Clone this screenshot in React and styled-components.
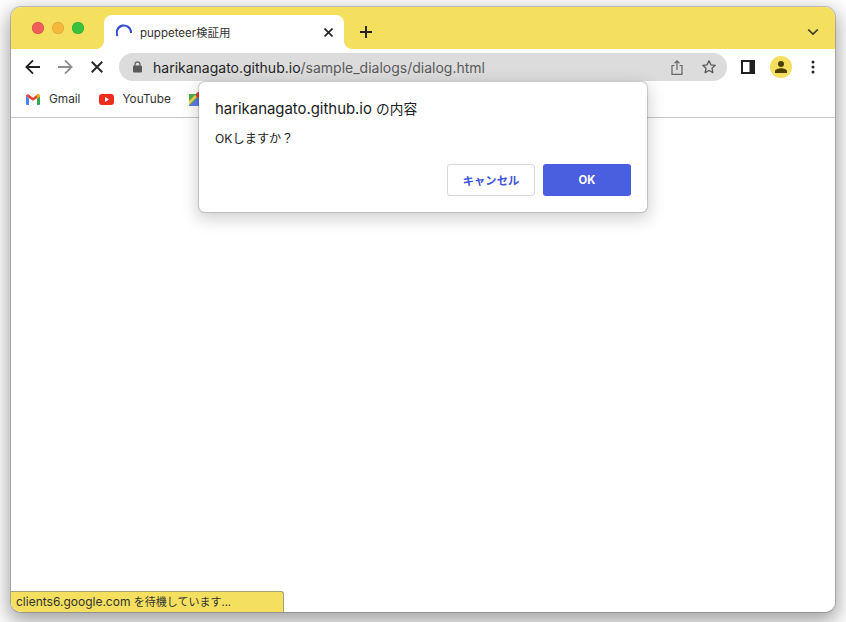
import React from "react";
import styled, { createGlobalStyle } from "styled-components";

const YELLOW = "#f5df5f";
const CJK = `"Noto Sans CJK JP"`;

const Global = createGlobalStyle`
  html, body { margin: 0; padding: 0; background: #fff; }
  body { width: 846px; height: 622px; overflow: hidden; font-family: Inter, ${CJK}, sans-serif; }
`;

const Desktop = styled.div`
  width: 846px;
  height: 622px;
  padding: 7px 11px 10px 11px;
  box-sizing: border-box;
`;

const Win = styled.div`
  position: relative;
  height: 605px;
  border-radius: 10px;
  background: #fff;
  display: flex;
  flex-direction: column;
  box-shadow: 0 0 0 1px rgba(0, 0, 0, 0.18), 0 7px 20px 3px rgba(0, 0, 0, 0.36);
`;

const TitleBar = styled.div`
  height: 42px;
  flex: none;
  background: ${YELLOW};
  border-radius: 10px 10px 0 0;
  display: flex;
  align-items: flex-end;
`;

const Traffic = styled.div`
  width: 93px;
  flex: none;
  height: 42px;
  display: flex;
  gap: 8px;
  padding: 15px 0 0 21px;
  box-sizing: border-box;
`;

const Light = styled.span`
  width: 12px;
  height: 12px;
  border-radius: 50%;
  background: ${(p) => p.$c};
  box-shadow: inset 0 0 0 0.5px ${(p) => p.$b};
`;

const Tab = styled.div`
  position: relative;
  width: 240px;
  height: 34px;
  flex: none;
  background: #fff;
  border-radius: 8px 8px 0 0;
  display: flex;
  align-items: center;
  padding: 0 11px 0 12px;
  box-sizing: border-box;
  &::before, &::after {
    content: "";
    position: absolute;
    bottom: 0;
    width: 8px;
    height: 8px;
  }
  &::before {
    left: -8px;
    background: radial-gradient(circle at 0 0, ${YELLOW} 7.6px, #fff 8.2px);
  }
  &::after {
    right: -8px;
    background: radial-gradient(circle at 100% 0, ${YELLOW} 7.6px, #fff 8.2px);
  }
`;

const TabTitle = styled.span`
  flex: 1;
  margin-left: 8px;
  font-size: 11.5px;
  color: #333;
  white-space: nowrap;
`;

const NewTab = styled.div`
  margin-left: 14px;
  width: 16px;
  height: 34px;
  display: flex;
  align-items: center;
  justify-content: center;
`;

const TabMenu = styled.div`
  margin-left: auto;
  width: 14px;
  height: 34px;
  margin-right: 15px;
  display: flex;
  align-items: center;
  justify-content: center;
`;

const Toolbar = styled.div`
  height: 34px;
  flex: none;
  display: flex;
  align-items: center;
  padding: 2px 0 0 12px;
  box-sizing: border-box;
`;

const Nav = styled.div`
  width: 20px;
  height: 20px;
  margin-right: 12px;
  display: flex;
  align-items: center;
  justify-content: center;
  flex: none;
`;

const Omni = styled.div`
  width: 608px;
  height: 28px;
  border-radius: 14px;
  background: #dcdcdc;
  display: flex;
  align-items: center;
  padding: 0 9px 0 14px;
  box-sizing: border-box;
  flex: none;
`;

const Url = styled.div`
  flex: 1;
  margin-left: 11px;
  font-size: 14px;
  color: #5a5a5a;
  white-space: nowrap;
`;

const Host = styled.span`
  color: #1f1f1f;
`;

const OmniIcon = styled.div`
  width: 18px;
  height: 18px;
  margin-left: 14px;
  display: flex;
  align-items: center;
  justify-content: center;
`;

const ToolIcons = styled.div`
  display: flex;
  align-items: center;
  margin-left: 11px;
`;

const ToolIcon = styled.div`
  width: 20px;
  height: 22px;
  display: flex;
  align-items: center;
  justify-content: center;
  margin-right: 12px;
`;

const Avatar = styled.div`
  width: 22px;
  height: 22px;
  border-radius: 50%;
  background: ${YELLOW};
  display: flex;
  align-items: center;
  justify-content: center;
  margin-right: 19px;
`;

const Bookmarks = styled.div`
  height: 35px;
  flex: none;
  border-bottom: 1px solid #c6c6c6;
  display: flex;
  align-items: center;
  padding: 0 0 2px 15px;
  box-sizing: border-box;
`;

const Bookmark = styled.div`
  display: flex;
  align-items: center;
  gap: ${(p) => p.$inner}px;
  font-size: 11.8px;
  color: #333;
  margin-right: ${(p) => p.$gap}px;
`;

const Page = styled.div`
  flex: 1;
  background: #fff;
  border-radius: 0 0 10px 10px;
`;

const Dialog = styled.div`
  position: absolute;
  left: 188px;
  top: 75px;
  width: 448px;
  height: 130px;
  box-sizing: border-box;
  background: #fff;
  border-radius: 6px;
  padding: 17px 16px 16px;
  box-shadow: 0 0 1px 0.5px rgba(0, 0, 0, 0.16), 0 5px 16px 3px rgba(0, 0, 0, 0.17);
  display: flex;
  flex-direction: column;
`;

const DialogTitle = styled.div`
  font-size: 14.9px;
  line-height: 20px;
  color: #202124;
  white-space: nowrap;
`;

const SmallCjk = styled.span`
  font-size: ${(p) => p.$size}px;
`;

const DialogText = styled.div`
  margin-top: 11px;
  font-size: 12.2px;
  line-height: 18px;
  color: #202124;
`;

const Buttons = styled.div`
  display: flex;
  justify-content: flex-end;
  gap: 8px;
  margin-top: 16px;
`;

const Btn = styled.div`
  width: 88px;
  height: 32px;
  box-sizing: border-box;
  border-radius: 3px;
  display: flex;
  align-items: center;
  justify-content: center;
  font-size: 11.3px;
  font-weight: 700;
  background: ${(p) => (p.$primary ? "#4a5ee0" : "#fff")};
  color: ${(p) => (p.$primary ? "#fff" : "#3f55db")};
  border: ${(p) => (p.$primary ? "none" : "1px solid #d8d8dc")};
`;

const Status = styled.div`
  position: absolute;
  left: 0;
  bottom: 0;
  width: 273px;
  height: 21px;
  box-sizing: border-box;
  background: ${YELLOW};
  border: 1px solid #a8a27a;
  border-left: none;
  border-bottom: none;
  border-radius: 0 3px 0 10px;
  padding-left: 5px;
  font-size: 12px;
  line-height: 20px;
  color: #333;
  white-space: nowrap;
`;

const Spinner = () => (
  <svg width="16" height="16" viewBox="0 0 16 16" fill="none" style={{ flex: "none" }}>
    <path d="M1.500 12A7.200 7.200 0 1 1 15.100 9" stroke="#3a4fcf" strokeWidth="2.2" />
  </svg>
);
const CloseIcon = ({ s = 10, w = 1.8, c = "#222" }) => (
  <svg width={s} height={s} viewBox="0 0 10 10" fill="none">
    <path d="M.6.6l8.8 8.8M9.400.6L.6 9.400" stroke={c} strokeWidth={w} />
  </svg>
);
const Arrow = ({ c, right }) => (
  <svg width="16" height="16" viewBox="0 0 16 16" fill="none" style={right ? { transform: "scaleX(-1)" } : undefined}>
    <path d="M15 8H1.800M8 1.400L1.400 8 8 14.600" stroke={c} strokeWidth="1.8" />
  </svg>
);

export default function App() {
  return (
    <Desktop>
      <Global />
      <Win>
        <TitleBar>
          <Traffic>
            <Light $c="#ee5f57" $b="#d24a43" />
            <Light $c="#f4b93c" $b="#d99f2b" />
            <Light $c="#3cc13f" $b="#2ca52f" />
          </Traffic>
          <Tab>
            <Spinner />
            <TabTitle>puppeteer検証用</TabTitle>
            <CloseIcon s={9} />
          </Tab>
          <NewTab>
            <svg width="12" height="12" viewBox="0 0 12 12" fill="none">
              <path d="M6 0v12M0 6h12" stroke="#222" strokeWidth="1.9" />
            </svg>
          </NewTab>
          <TabMenu>
            <svg width="12" height="8" viewBox="0 0 12 8" fill="none">
              <path d="M1.200 1.500L6 6l4.800-4.500" stroke="#3a3a2a" strokeWidth="1.7" />
            </svg>
          </TabMenu>
        </TitleBar>
        <Toolbar>
          <Nav><Arrow c="#222" /></Nav>
          <Nav><Arrow c="#8f8f8f" right /></Nav>
          <Nav><CloseIcon s={12} w={1.7} c="#2a2a2a" /></Nav>
          <Omni>
            <svg width="9" height="12" viewBox="0 0 9 12" style={{ flex: "none" }}>
              <path d="M2 5V3.300a2.500 2.500 0 0 1 5 0V5" fill="none" stroke="#5a5a5c" strokeWidth="1.2" />
              <rect x="0" y="4.600" width="9" height="7" rx="1" fill="#5a5a5c" />
            </svg>
            <Url><Host>harikanagato.github.io</Host>/sample_dialogs/dialog.html</Url>
            <OmniIcon>
              <svg width="12" height="15" viewBox="0 0 12 15" fill="none" stroke="#666" strokeWidth="1.2">
                <path d="M3.500 5.500H1v8.900h10V5.500H8.500" />
                <path d="M6 10V1M3.600 3.200L6 .9l2.400 2.300" />
              </svg>
            </OmniIcon>
            <OmniIcon>
              <svg width="16" height="16" viewBox="0 0 16 16" fill="none" stroke="#5a5a5a" strokeWidth="1.3" strokeLinejoin="round">
                <path d="M8 1.800l1.900 4 4.300.5-3.200 3 .9 4.300L8 11.500l-3.900 2.100.9-4.300-3.200-3 4.300-.5z" />
              </svg>
            </OmniIcon>
          </Omni>
          <ToolIcons>
            <ToolIcon>
              <svg width="14" height="14" viewBox="0 0 14 14">
                <path d="M0 0h14v14H0z" fill="#202020" />
                <path d="M2 2h6.500v10H2z" fill="#fff" />
              </svg>
            </ToolIcon>
            <Avatar>
              <svg width="12" height="12" viewBox="0 0 12 12" fill="#4a3f00">
                <circle cx="6" cy="3" r="3" />
                <path d="M0 12V10.200C0 8.300 3.500 7.300 6 7.300s6 1 6 2.900V12z" />
              </svg>
            </Avatar>
            <svg width="4" height="14" viewBox="0 0 4 14" fill="#222" style={{ flex: "none" }}>
              <circle cx="2" cy="2" r="1.500" />
              <circle cx="2" cy="7" r="1.500" />
              <circle cx="2" cy="12" r="1.500" />
            </svg>
          </ToolIcons>
        </Toolbar>
        <Bookmarks>
          <Bookmark $inner={9} $gap={19}>
            <svg width="14" height="11" viewBox="0 0 14 11">
              <path d="M3 11V4l4 3 4-3v7z" fill="#fff" />
              <path d="M0 2.200C0 .6 1.700-.4 3 .7l4 3.100v3L0 2.200z" fill="#ea4335" />
              <path d="M7 3.800L11 .7c1.300-1.100 3-.1 3 1.500L7 6.800z" fill="#ea4335" />
              <path d="M0 2.200l3 2.300V11H1a1 1 0 0 1-1-1z" fill="#4285f4" />
              <path d="M11 4.500l3-2.300V10a1 1 0 0 1-1 1h-2z" fill="#34a853" />
              <path d="M11 .7c1.300-1.100 3-.1 3 1.500l-3 2.300z" fill="#f4b400" />
            </svg>
            <span>Gmail</span>
          </Bookmark>
          <Bookmark $inner={8} $gap={18}>
            <svg width="15" height="11" viewBox="0 0 15 11">
              <rect width="15" height="11" rx="3" fill="#ee2b1d" />
              <path d="M6 3l4 2.500-4 2.500z" fill="#fff" />
            </svg>
            <span>YouTube</span>
          </Bookmark>
          <svg width="14" height="14" viewBox="0 0 14 14" style={{ flex: "none" }}>
            <rect y="2" width="14" height="12" fill="#4caf50" />
            <path d="M0 14L9 5l5 5v4z" fill="#5b7fe8" />
            <path d="M0 9L6 3l2 2-8 8z" fill="#f8d24a" />
            <circle cx="10" cy="3" r="3" fill="#d9453a" />
          </svg>
        </Bookmarks>
        <Page />
        <Dialog>
          <DialogTitle>harikanagato.github.io <SmallCjk $size={13.7}>の内容</SmallCjk></DialogTitle>
          <DialogText>OKしますか？</DialogText>
          <Buttons>
            <Btn>キャンセル</Btn>
            <Btn $primary>OK</Btn>
          </Buttons>
        </Dialog>
        <Status>clients6.google.com <SmallCjk $size={11}>を待機しています...</SmallCjk></Status>
      </Win>
    </Desktop>
  );
}
